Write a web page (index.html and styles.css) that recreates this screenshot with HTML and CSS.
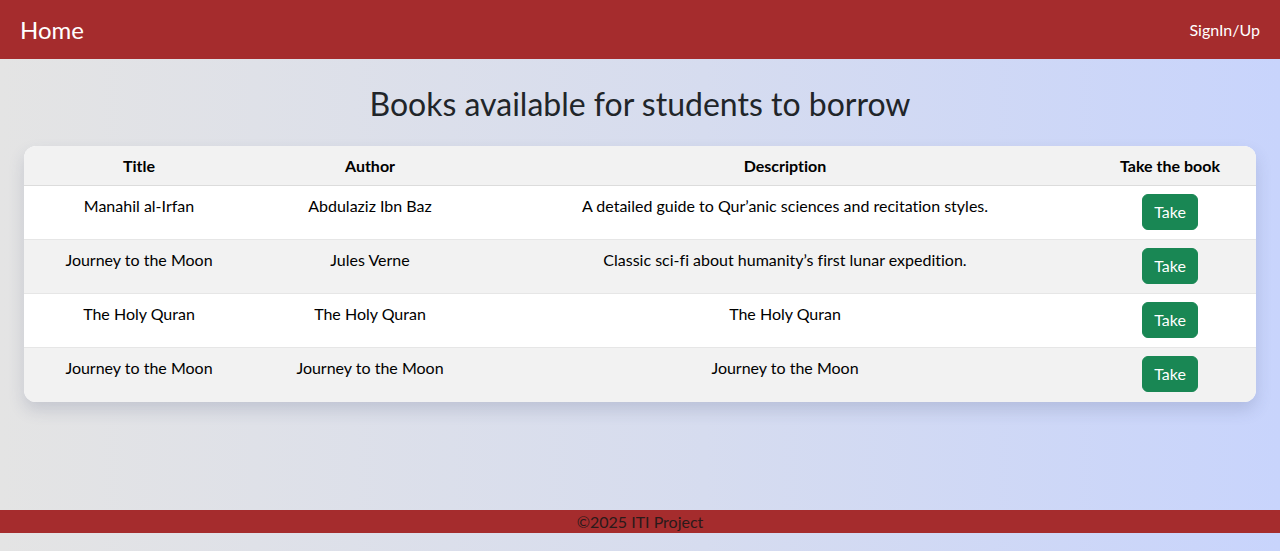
FILE: index.html
```html
<!DOCTYPE html>
<html lang="en">
<head>
<meta charset="utf-8">
<title>Books</title>
<link rel="stylesheet" href="styles.css">
</head>
<body>
<header class="topbar">
  <a class="brand" href="#">Home</a>
  <a class="signin" href="#">SignIn/Up</a>
</header>
<main class="content">
  <h2 class="page-title">Books available for students to borrow</h2>
  <div class="card">
    <table class="books">
      <colgroup>
        <col class="c-title"><col class="c-author"><col class="c-desc"><col class="c-take">
      </colgroup>
      <thead>
        <tr><th>Title</th><th>Author</th><th>Description</th><th>Take the book</th></tr>
      </thead>
      <tbody>
        <tr><td>Manahil al-Irfan</td><td>Abdulaziz Ibn Baz</td><td>A detailed guide to Qur’anic sciences and recitation styles.</td><td><button class="btn">Take</button></td></tr>
        <tr><td>Journey to the Moon</td><td>Jules Verne</td><td>Classic sci-fi about humanity’s first lunar expedition.</td><td><button class="btn">Take</button></td></tr>
        <tr><td>The Holy Quran</td><td>The Holy Quran</td><td>The Holy Quran</td><td><button class="btn">Take</button></td></tr>
        <tr><td>Journey to the Moon</td><td>Journey to the Moon</td><td>Journey to the Moon</td><td><button class="btn">Take</button></td></tr>
      </tbody>
    </table>
  </div>
</main>
<footer class="footer">©2025 ITI Project</footer>
</body>
</html>
```

FILE: styles.css
```css
* { box-sizing: border-box; }
html, body { height: 100%; }
body {
  margin: 0;
  min-height: 100vh;
  display: flex;
  flex-direction: column;
  font-family: "Segoe UI", Lato, "Noto Sans", sans-serif;
  font-variant-ligatures: none;
  font-size: 16px;
  line-height: 1.5;
  color: #212529;
  background: linear-gradient(to right, #e4e4e4 0%, #d6dcef 55%, #c8d4fc 100%);
}
.topbar {
  height: 59px;
  background: #a52c2d;
  display: flex;
  align-items: center;
  justify-content: space-between;
  padding: 0 20px;
}
.brand {
  color: #fff;
  font-size: 24px;
  text-decoration: none;
  line-height: 1;
}
.signin {
  color: #fff;
  font-size: 16px;
  text-decoration: none;
}
.content {
  padding: 0 24px;
}
.page-title {
  margin: 26px 0 23px;
  text-align: center;
  font-size: 32px;
  font-weight: 400;
  line-height: 1.2;
  color: #212529;
}
.card {
  border-radius: 12px;
  overflow: hidden;
  background: #fff;
  box-shadow: 0 8px 16px rgba(60, 70, 110, 0.18);
}
.books {
  width: 100%;
  border-collapse: collapse;
  table-layout: fixed;
}
.c-title { width: 230px; }
.c-author { width: 232px; }
.c-desc { width: 598px; }
.c-take { width: 172px; }
.books th, .books td {
  padding: 8px;
  text-align: center;
  vertical-align: top;
  border-bottom: 1px solid #e6e6e6;
}
.books th {
  background: #f2f2f2;
  font-weight: 700;
  color: #000;
  padding: 8px 8px 7px;
  border-bottom: 1px solid #dcdcdc;
}
.books td { color: #000; height: 54px; }
.books tbody tr:nth-child(even) td { background: #f2f2f2; }
.books tbody tr:last-child td { border-bottom: 0; }
.btn {
  font: inherit;
  color: #fff;
  background: #198754;
  border: 1px solid #198754;
  border-radius: 6px;
  padding: 5px 11px;
  line-height: 24px;
  cursor: pointer;
}
.footer {
  margin-top: auto;
  margin-bottom: 18px;
  height: 23px;
  background: #a52c2d;
  text-align: center;
  font-size: 16px;
  line-height: 23px;
  color: #2a1a1a;
}
```
